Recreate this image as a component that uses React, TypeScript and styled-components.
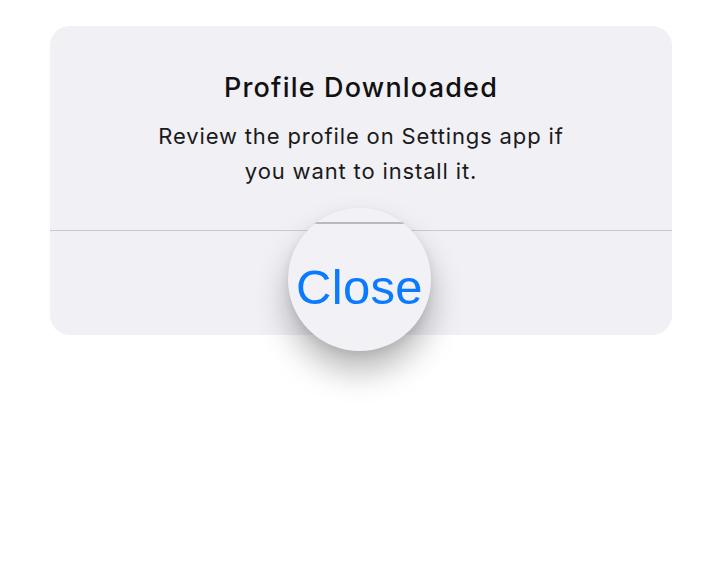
import React from "react";
import styled, { createGlobalStyle } from "styled-components";

const Global = createGlobalStyle`
  html, body { margin: 0; padding: 0; background: #ffffff; }
  body { width: 720px; height: 571px; overflow: hidden; font-family: Inter, "Noto Sans", "Liberation Sans", sans-serif; }
`;

const Page = styled.div`
  width: 720px;
  height: 571px;
  padding: 26px 48px 0 50px;
  box-sizing: border-box;
`;

const Alert = styled.div`
  width: 622px;
  height: 309px;
  background: #f0f0f5;
  border-radius: 20px;
  display: flex;
  flex-direction: column;
`;

const Content = styled.div`
  height: 205px;
  box-sizing: border-box;
  padding-top: 45px;
  display: flex;
  flex-direction: column;
  align-items: center;
  text-align: center;
  border-bottom: 1px solid #c9c9ce;
`;

const Title = styled.div`
  font-size: 27px;
  font-weight: 500;
  color: #111111;
  line-height: 34px;
  letter-spacing: 1.2px;
`;

const Message = styled.div`
  margin-top: 14px;
  font-size: 22px;
  font-weight: 400;
  color: #1a1a1a;
  line-height: 35px;
  letter-spacing: 0.85px;
  width: 440px;
`;

const ButtonRow = styled.div`
  position: relative;
  flex: 1;
  display: flex;
  align-items: center;
  justify-content: center;
`;

const Lens = styled.div`
  position: absolute;
  left: 238px;
  top: -23px;
  width: 143px;
  height: 143px;
  border-radius: 50%;
  background: #f1f1f6;
  box-shadow: 0 20px 32px rgba(0, 0, 0, 0.28), 0 4px 10px rgba(0, 0, 0, 0.08);
  overflow: hidden;
  display: flex;
  align-items: center;
  justify-content: center;
`;

const LensDivider = styled.div`
  position: absolute;
  left: 0;
  right: 0;
  top: 14px;
  height: 2px;
  background: #b9b9be;
`;

const LensLabel = styled.div`
  font-family: "Liberation Sans", Arial, sans-serif;
  font-size: 49px;
  color: #0a7aff;
  margin-top: 14px;
  letter-spacing: 0.3px;
`;

export default function App() {
  return (
    <>
      <Global />
      <Page>
        <Alert>
          <Content>
            <Title>Profile Downloaded</Title>
            <Message>Review the profile on Settings app if you want to install it.</Message>
          </Content>
          <ButtonRow>
            <Lens>
              <LensDivider />
              <LensLabel>Close</LensLabel>
            </Lens>
          </ButtonRow>
        </Alert>
      </Page>
    </>
  );
}
